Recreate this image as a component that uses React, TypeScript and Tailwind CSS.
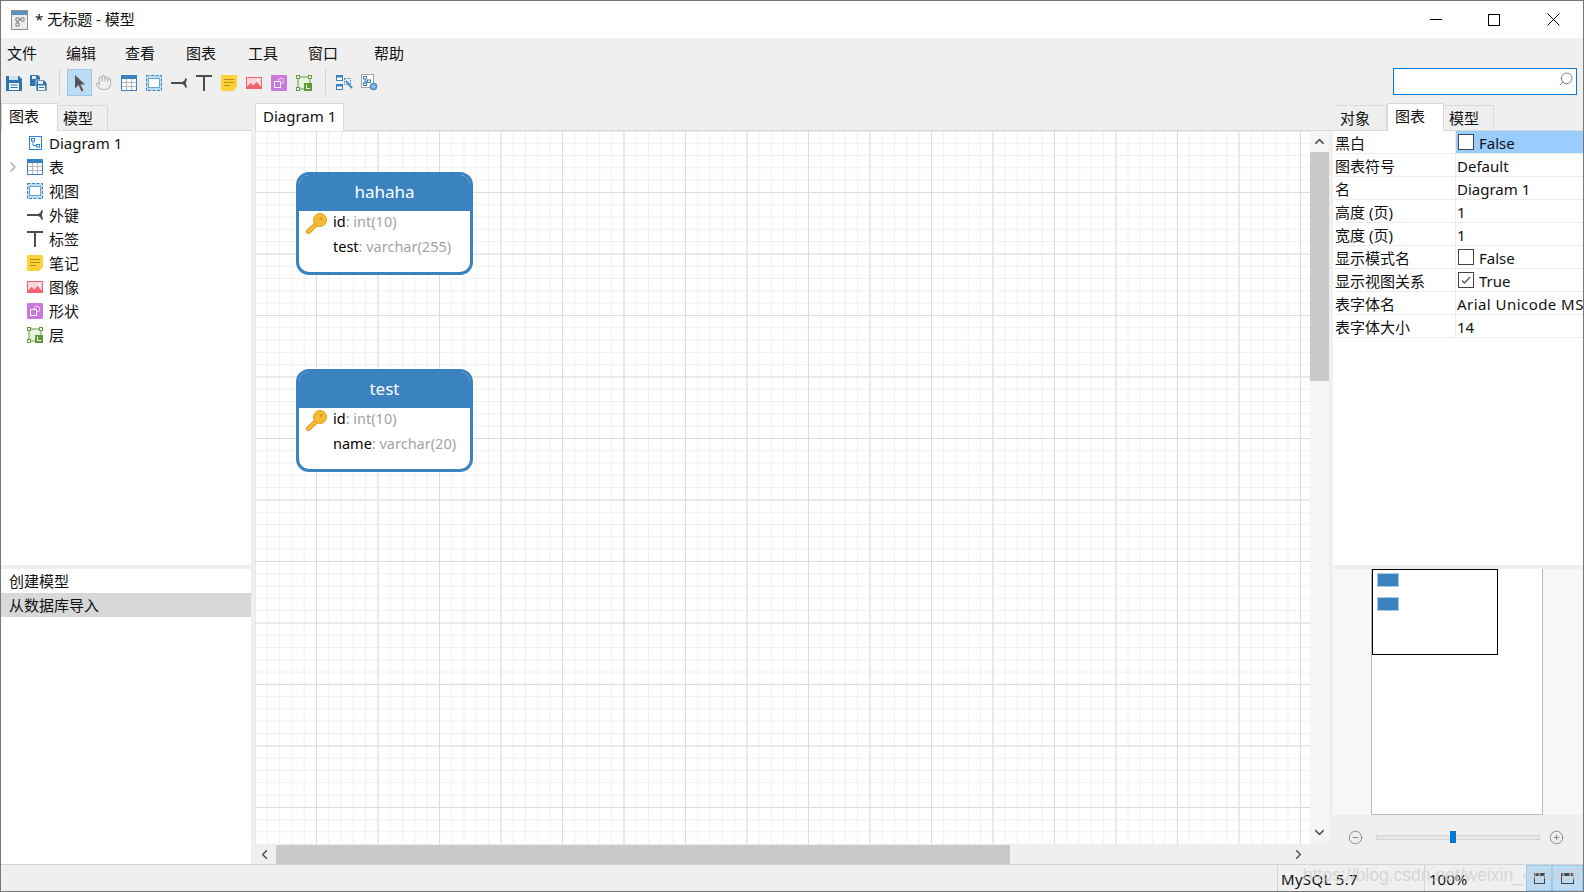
import { ChevronDown, ChevronLeft, ChevronRight, ChevronUp, CircleMinus, CirclePlus, Hand, Search } from "lucide-react";
import type { ReactNode } from "react";

function SaveIcon() {
	return (
		<svg width="16" height="16" viewBox="0 0 16 16">
			<path d="M0 1h13l3 3v12H0z" fill="#2f74ad" />
			<rect x="3" y="1" width="9" height="4" fill="#cfe0ee" />
			<rect x="3" y="8" width="10" height="7" fill="#f4f4f4" />
			<path d="M4.5 10h7M4.5 12.5h7" stroke="#2f74ad" />
		</svg>
	);
}

function SaveAllIcon() {
	return (
		<svg width="17" height="16" viewBox="0 0 17 16">
			<path d="M0 0h8l2 2v4H6v5H0z" fill="#2f74ad" />
			<rect x="2" y="1" width="4" height="3" fill="#e3edf5" />
			<path d="M6 5h8l3 3v8H6z" fill="#2f74ad" stroke="#fff" strokeWidth="0.6" />
			<rect x="8" y="6" width="5" height="3" fill="#e3edf5" />
			<rect x="8" y="10.5" width="7" height="4.5" fill="#f4f4f4" />
			<path d="M9 12.5h5" stroke="#2f74ad" />
		</svg>
	);
}

function PointerIcon() {
	return (
		<svg width="16" height="18" viewBox="0 0 16 18">
			<path d="M3 1l10 9.5H8.5l3 6-2 1-3-6.5L3 14.5z" fill="#56565a" />
		</svg>
	);
}

function TableIcon() {
	return (
		<svg width="16" height="16" viewBox="0 0 16 16">
			<rect x="0.5" y="0.5" width="15" height="15" fill="#fff" stroke="#3a82c0" />
			<rect width="16" height="4" fill="#3a82c0" />
			<path d="M5.5 4v11M10.5 4v11M1 7.5h14M1 11.5h14" stroke="#b7b7b7" />
		</svg>
	);
}

function ViewIcon() {
	return (
		<svg width="16" height="16" viewBox="0 0 16 16">
			<rect x="0.5" y="0.5" width="15" height="15" fill="#b9dcf7" stroke="#3a82c0" strokeDasharray="3 1.5" />
			<rect x="2.5" y="3.5" width="11" height="9" fill="#fff" stroke="#6aa5d6" />
		</svg>
	);
}

function ForeignKeyIcon() {
	return (
		<svg width="16" height="16" viewBox="0 0 16 16">
			<path d="M0 8h15M15 3.5Q15 7 11 8q4 1 4 4.5" fill="none" stroke="#4d4d4d" strokeWidth="2" />
		</svg>
	);
}

function LabelIcon() {
	return (
		<svg width="16" height="16" viewBox="0 0 16 16">
			<path d="M0 1h16M8 1v15" fill="none" stroke="#4d4d4d" strokeWidth="2" />
		</svg>
	);
}

function NoteIcon() {
	return (
		<svg width="16" height="16" viewBox="0 0 16 16">
			<path d="M0 1a1 1 0 0 1 1-1h15v12l-4 4H1a1 1 0 0 1-1-1z" fill="#fdd138" />
			<path d="M3 4.5h10M3 7.5h10M3 10.5h6" stroke="#b7891e" />
		</svg>
	);
}

function ImageIcon() {
	return (
		<svg width="16" height="16" viewBox="0 0 16 16">
			<rect y="2" width="16" height="12" fill="#f2636f" />
			<rect x="1" y="3" width="14" height="8" fill="#fbd6d9" />
			<path d="M1 12l3.5-4 3 2.5 3-3.5 4.5 5v1H1z" fill="#f2636f" />
			<rect x="11" y="4" width="2" height="2" fill="#fff" />
		</svg>
	);
}

function ShapeIcon() {
	return (
		<svg width="16" height="16" viewBox="0 0 16 16">
			<rect width="16" height="16" rx="1" fill="#cb78de" />
			<circle cx="10" cy="6" r="2.8" fill="none" stroke="#f2d7f7" />
			<rect x="3.5" y="6.5" width="6" height="6" fill="#cb78de" stroke="#fff" />
		</svg>
	);
}

function LayerIcon() {
	return (
		<svg width="16" height="16" viewBox="0 0 16 16">
			<rect x="2" y="2" width="12" height="12" fill="#e9f3e0" stroke="#5fa03c" />
			<rect x="0.5" y="0.5" width="3" height="3" fill="#fff" stroke="#5fa03c" />
			<rect x="12.5" y="0.5" width="3" height="3" fill="#fff" stroke="#5fa03c" />
			<rect x="0.5" y="12.5" width="3" height="3" fill="#fff" stroke="#5fa03c" />
			<rect x="8" y="8" width="8" height="8" fill="#5b9a37" />
			<path d="M10.5 9.5v4h3.5" fill="none" stroke="#fff" />
		</svg>
	);
}

function AutoLayoutIcon() {
	return (
		<svg width="17" height="16" viewBox="0 0 17 16">
			<rect x="0.5" y="0.5" width="6" height="5" fill="#fff" stroke="#3a82c0" />
			<rect x="0.5" y="0.5" width="6" height="2" fill="#3a82c0" />
			<rect x="0.5" y="9.5" width="6" height="5" fill="#fff" stroke="#3a82c0" />
			<rect x="0.5" y="9.5" width="6" height="2" fill="#3a82c0" />
			<rect x="8.5" y="3.5" width="6" height="6" fill="#e1eef8" stroke="#3a82c0" strokeDasharray="1.5 1" />
			<path d="M10 6l6 7" stroke="#4b8fc7" strokeWidth="2" />
		</svg>
	);
}

function DiagramGearIcon() {
	return (
		<svg width="17" height="17" viewBox="0 0 17 17">
			<rect x="0.5" y="0.5" width="12" height="13" fill="#fff" stroke="#a3a3a3" />
			<rect x="2.5" y="2.5" width="3" height="2.5" fill="#fff" stroke="#3a82c0" />
			<rect x="6.5" y="6" width="3" height="2.5" fill="#fff" stroke="#3a82c0" />
			<rect x="2.5" y="9" width="3" height="2.5" fill="#fff" stroke="#3a82c0" />
			<path d="M4 5v5M4 7.2h2.5" stroke="#3a82c0" />
			<circle cx="12.5" cy="12.5" r="3" fill="#8dbbe0" stroke="#4b8fc7" strokeWidth="1.5" />
		</svg>
	);
}

function DiagramIcon() {
	return (
		<svg width="13" height="14" viewBox="0 0 13 14">
			<rect x="0.5" y="0.5" width="12" height="13" fill="#fff" stroke="#2a83d8" />
			<rect x="2.5" y="2.5" width="3" height="2.5" fill="#fff" stroke="#2a83d8" />
			<rect x="7.5" y="8.5" width="3" height="2.5" fill="#fff" stroke="#2a83d8" />
			<path d="M4 5v4.5h3.5" fill="none" stroke="#2a83d8" />
		</svg>
	);
}

function AppIcon() {
	return (
		<svg width="17" height="20" viewBox="0 0 17 20">
			<rect x="0.5" y="0.5" width="16" height="19" fill="#ececec" stroke="#8d8d8d" />
			<rect x="1" y="1" width="15" height="4" fill="#5b8fbd" />
			<path d="M5 8h3v3H5zM10 8h3v3h-3zM5 13h3v3H5zM8 9.5h2M6.5 11v2" fill="#fff" stroke="#777" />
		</svg>
	);
}

function KeyIcon() {
	return (
		<svg width="21" height="21" viewBox="0 0 21 21" className="shrink-0 translate-x-px translate-y-[2px]">
			<path d="M11 10.5L2.5 18.5" stroke="#d9971c" strokeWidth="5" strokeLinecap="round" />
			<path d="M11 10.5L2.5 18.5" stroke="#f6bb34" strokeWidth="3.4" strokeLinecap="round" />
			<circle cx="14" cy="7" r="6.5" fill="#f6bb34" stroke="#dca021" />
			<circle cx="15" cy="5.5" r="1.5" fill="#d9971c" />
		</svg>
	);
}

const menus = [
	{ label: "文件", width: "w-[59px]" },
	{ label: "编辑", width: "w-[59px]" },
	{ label: "查看", width: "w-[61px]" },
	{ label: "图表", width: "w-[62px]" },
	{ label: "工具", width: "w-[60px]" },
	{ label: "窗口", width: "w-[66px]" },
	{ label: "帮助", width: "w-[50px]" },
];

const treeItems: { label: string; icon: ReactNode; expandable?: boolean }[] = [
	{ label: "Diagram 1", icon: <DiagramIcon /> },
	{ label: "表", icon: <TableIcon />, expandable: true },
	{ label: "视图", icon: <ViewIcon /> },
	{ label: "外键", icon: <ForeignKeyIcon /> },
	{ label: "标签", icon: <LabelIcon /> },
	{ label: "笔记", icon: <NoteIcon /> },
	{ label: "图像", icon: <ImageIcon /> },
	{ label: "形状", icon: <ShapeIcon /> },
	{ label: "层", icon: <LayerIcon /> },
];

const properties: { label: string; value: string; check?: "on" | "off"; selected?: boolean; wide?: boolean }[] = [
	{ label: "黑白", value: "False", check: "off", selected: true },
	{ label: "图表符号", value: "Default" },
	{ label: "名", value: "Diagram 1" },
	{ label: "高度 (页)", value: "1" },
	{ label: "宽度 (页)", value: "1" },
	{ label: "显示模式名", value: "False", check: "off" },
	{ label: "显示视图关系", value: "True", check: "on" },
	{ label: "表字体名", value: "Arial Unicode MS", wide: true },
	{ label: "表字体大小", value: "14" },
];

function ToolButton({ children, active }: { children: ReactNode; active?: boolean }) {
	return (
		<div
			className={
				active
					? "flex h-[27px] w-[25px] items-center justify-center border border-[#99c9ef] bg-[#bcdcf4]"
					: "flex h-[27px] w-[25px] items-center justify-center pr-0.5"
			}
		>
			{children}
		</div>
	);
}

function ToolSeparator({ width }: { width: string }) {
	return (
		<div className={`flex h-[27px] justify-center ${width}`}>
			<div className="h-[26px] w-px bg-[#d4d4d4]" />
		</div>
	);
}

function Tab({ label, active, width }: { label: string; active?: boolean; width: string }) {
	return (
		<div
			className={
				active
					? `${width} -mb-px flex h-[28px] items-center border-x border-t border-[#d9d9d9] bg-white pb-[3px] pl-[7px]`
					: `${width} flex h-[25px] items-center border-t border-r border-[#d9d9d9] pl-[5px]`
			}
		>
			{label}
		</div>
	);
}

function Checkbox({ checked }: { checked?: boolean }) {
	return (
		<div className="flex h-4 w-4 items-center justify-center border border-[#444] bg-white">
			{checked && (
				<svg width="12" height="12" viewBox="0 0 12 12">
					<path d="M2 6.5l2.5 2.5L10 3" fill="none" stroke="#555" strokeWidth="1.3" />
				</svg>
			)}
		</div>
	);
}

function TableNode({ name, className, fields }: { name: string; className: string; fields: [string, string, boolean][] }) {
	return (
		<div className={`absolute left-[41px] h-[103px] w-[177px] overflow-hidden rounded-[13px] border-[3px] border-[#3a82c0] bg-white ${className}`}>
			<div className="flex h-9 items-center justify-center bg-[#3a82c0] pb-[3px] text-[17px] text-white">{name}</div>
			<div className="-mt-[2px] text-[14.5px]">
				{fields.map(([field, type, primary]) => (
					<div key={field} className="flex h-[25px] items-center pl-[6px]">
						<div className="w-7 shrink-0">{primary && <KeyIcon />}</div>
						<span className="text-black">{field}</span>
						<span className="text-[#a3a3a3]">: {type}</span>
					</div>
				))}
			</div>
		</div>
	);
}

export default function App() {
	return (
		<div className="relative flex h-[892px] w-[1584px] flex-col overflow-hidden border border-[#777] bg-[#efefef] font-['Noto_Sans','Noto_Sans_CJK_SC',sans-serif] text-[15px] leading-none text-[#111]">
			{/* Title bar */}
			<div className="flex h-[37px] shrink-0 items-center bg-white pl-[10px]">
				<AppIcon />
				<span className="ml-[7px]">* 无标题 - 模型</span>
				<div className="ml-auto flex items-center">
					<div className="flex w-[58px] justify-center">
						<div className="h-px w-3 bg-black" />
					</div>
					<div className="flex w-[58px] justify-center">
						<div className="h-3 w-3 border border-black" />
					</div>
					<div className="flex w-[60px] justify-center">
						<svg width="13" height="13" viewBox="0 0 13 13">
							<path d="M0.5 0.5l12 12M12.5 0.5l-12 12" stroke="#000" />
						</svg>
					</div>
				</div>
			</div>

			{/* Menu */}
			<div className="flex h-[30px] shrink-0 items-center pl-[6px]">
				{menus.map((menu) => (
					<div key={menu.label} className={menu.width}>
						{menu.label}
					</div>
				))}
			</div>

			{/* Toolbar */}
			<div className="flex h-[35px] shrink-0 items-start pt-px pl-px">
				<ToolButton><SaveIcon /></ToolButton>
				<ToolButton><SaveAllIcon /></ToolButton>
				<ToolSeparator width="w-[15px]" />
				<ToolButton active><PointerIcon /></ToolButton>
				<ToolButton><Hand size={17} strokeWidth={1.5} className="text-[#b5b5b5]" /></ToolButton>
				<ToolButton><TableIcon /></ToolButton>
				<ToolButton><ViewIcon /></ToolButton>
				<ToolButton><ForeignKeyIcon /></ToolButton>
				<ToolButton><LabelIcon /></ToolButton>
				<ToolButton><NoteIcon /></ToolButton>
				<ToolButton><ImageIcon /></ToolButton>
				<ToolButton><ShapeIcon /></ToolButton>
				<ToolButton><LayerIcon /></ToolButton>
				<ToolSeparator width="w-4" />
				<ToolButton><AutoLayoutIcon /></ToolButton>
				<ToolButton><DiagramGearIcon /></ToolButton>
				<div className="mr-[6px] ml-auto -mt-px flex h-[27px] w-[184px] items-start justify-end border border-[#0078d7] bg-white pt-[2px] pr-[2px]">
					<Search size={16} strokeWidth={1.4} className="-scale-x-100 text-[#777]" />
				</div>
			</div>

			<div className="flex min-h-0 flex-1">
				{/* Left panel */}
				<div className="flex w-[250px] shrink-0 flex-col">
					<div className="flex h-[28px] shrink-0 items-end border-b border-[#d9d9d9]">
						<Tab label="图表" active width="w-[57px]" />
						<Tab label="模型" width="w-[50px]" />
					</div>
					<div className="h-[434px] shrink-0 bg-white">
						{treeItems.map((item) => (
							<div key={item.label} className="flex h-6 items-center">
								<div className="flex w-[26px] justify-end pr-[6px]">
									{item.expandable && <ChevronRight size={16} strokeWidth={2.5} className="text-[#b0b0b0]" />}
								</div>
								<div className="flex w-[22px] justify-center pr-1.5">{item.icon}</div>
								<span>{item.label}</span>
							</div>
						))}
					</div>
					<div className="mt-1 flex-1 bg-white">
						<div className="flex h-6 items-center pl-2">创建模型</div>
						<div className="flex h-6 items-center bg-[#d8d8d8] pl-2">从数据库导入</div>
					</div>
				</div>

				{/* Diagram area */}
				<div className="ml-1 flex w-[1078px] shrink-0 flex-col">
					<div className="flex h-[28px] shrink-0 items-end border-b border-[#d9d9d9]">
						<Tab label="Diagram 1" active width="w-[89px]" />
					</div>
					<div className="flex min-h-0 flex-1">
						<div className="relative flex-1 bg-white bg-[linear-gradient(#dcdcdc_1px,transparent_1px),linear-gradient(90deg,#dcdcdc_1px,transparent_1px),linear-gradient(#f0f0f0_1px,transparent_1px),linear-gradient(90deg,#f0f0f0_1px,transparent_1px)] bg-[size:61.5px_61.5px,61.5px_61.5px,12.3px_12.3px,12.3px_12.3px] bg-[position:-0.5px_-0.5px]">
							<TableNode
								name="hahaha"
								className="top-[41px]"
								fields={[
									["id", "int(10)", true],
									["test", "varchar(255)", false],
								]}
							/>
							<TableNode
								name="test"
								className="top-[238px]"
								fields={[
									["id", "int(10)", true],
									["name", "varchar(20)", false],
								]}
							/>
						</div>
						<div className="mr-1 flex w-[19px] shrink-0 flex-col bg-[#f5f5f5]">
							<div className="flex h-[21px] items-center justify-center">
								<ChevronUp size={15} strokeWidth={2.5} className="text-[#555]" />
							</div>
							<div className="h-[229px] bg-[#c9c9c9]" />
							<div className="mt-auto mb-px flex h-[21px] items-center justify-center">
								<ChevronDown size={15} strokeWidth={2.5} className="text-[#555]" />
							</div>
						</div>
					</div>
					<div className="flex h-5 shrink-0 items-center">
						<div className="flex w-[21px] justify-center pr-0.5">
							<ChevronLeft size={15} strokeWidth={2.5} className="text-[#555]" />
						</div>
						<div className="h-[19px] w-[734px] bg-[#c9c9c9]" />
						<div className="ml-[278px] flex w-[21px] justify-center">
							<ChevronRight size={15} strokeWidth={2.5} className="text-[#555]" />
						</div>
					</div>
				</div>

				{/* Right panel */}
				<div className="flex w-[250px] shrink-0 flex-col">
					<div className="flex h-[28px] shrink-0 items-end border-b border-[#d9d9d9] pl-[2px]">
						<Tab label="对象" width="w-[52px]" />
						<Tab label="图表" active width="w-[57px]" />
						<Tab label="模型" width="w-[50px]" />
					</div>
					<div className="h-[434px] shrink-0 bg-white pl-px">
						{properties.map((property) => (
							<div key={property.label} className="flex h-[23px] items-center border-b border-[#ececec]">
								<div className="w-[121px] shrink-0 pt-[2px] pl-px">{property.label}</div>
								<div
									className={
										property.selected
											? "flex h-full min-w-0 flex-1 items-center overflow-hidden border-l border-[#ececec] bg-[#99ccff] pl-px whitespace-nowrap"
											: "flex h-full min-w-0 flex-1 items-center overflow-hidden border-l border-[#ececec] pl-px whitespace-nowrap"
									}
								>
									{property.check ? (
										<div className="flex items-center gap-[5px] pl-px">
											<Checkbox checked={property.check === "on"} />
											<span className="pt-[2px]">{property.value}</span>
										</div>
									) : (
										<span className={property.wide ? "pt-[2px] tracking-[0.45px]" : "pt-[2px]"}>{property.value}</span>
									)}
								</div>
							</div>
						))}
					</div>

					{/* Overview */}
					<div className="mt-1 flex h-[246px] shrink-0 justify-center bg-[#f7f7f7] pr-[2px]">
						<div className="relative h-full w-[172px] border-x border-b border-[#bbb] bg-white">
							<div className="h-[86px] w-[126px] border border-black pt-[3px] pl-1">
								<div className="h-[14px] w-[22px] border border-[#a8cbe6] bg-[#3a82c0]" />
								<div className="mt-[10px] h-[14px] w-[22px] border border-[#a8cbe6] bg-[#3a82c0]" />
							</div>
						</div>
					</div>
					<div className="flex flex-1 items-center pb-[4px] pl-[15px]">
						<CircleMinus size={15} strokeWidth={1.3} className="text-[#777]" />
						<div className="relative mr-[9px] ml-[13px] h-[5px] w-[164px] border border-[#d5d5d5] bg-[#e6e6e6]">
							<div className="absolute top-[-5px] left-[73px] h-[12px] w-[6px] bg-[#0078d7]" />
						</div>
						<CirclePlus size={15} strokeWidth={1.3} className="text-[#777]" />
					</div>
				</div>
			</div>

			{/* Status bar */}
			<div className="flex h-[27px] shrink-0 items-stretch justify-end border-t border-[#d4d4d4]">
				<div className="flex w-[147px] items-center border-l border-[#d4d4d4] pt-[2px] pl-[3px] tracking-[0.3px]">MySQL 5.7</div>
				<div className="flex w-[102px] items-center border-l border-[#d4d4d4] pt-[2px] pl-1">100%</div>
				<div className="flex w-[26px] items-center justify-center border border-[#99c9ef] bg-[#bcdcf4]">
					<div className="h-[11px] w-[11px] border border-[#444] border-t-[3px]" />
				</div>
				<div className="flex w-[31px] items-center justify-center border border-[#99c9ef] bg-[#bcdcf4]">
					<div className="h-[11px] w-[13px] border border-[#444] border-t-[3px]" />
				</div>
			</div>

			{/* CSDN watermark */}
			<div className="absolute top-[866px] left-[1302px] font-['Liberation_Sans',sans-serif] text-[17.5px] whitespace-nowrap text-[#cfcfcf]/80">
				https://blog.csdn.net/weixin_44440642
			</div>
		</div>
	);
}
